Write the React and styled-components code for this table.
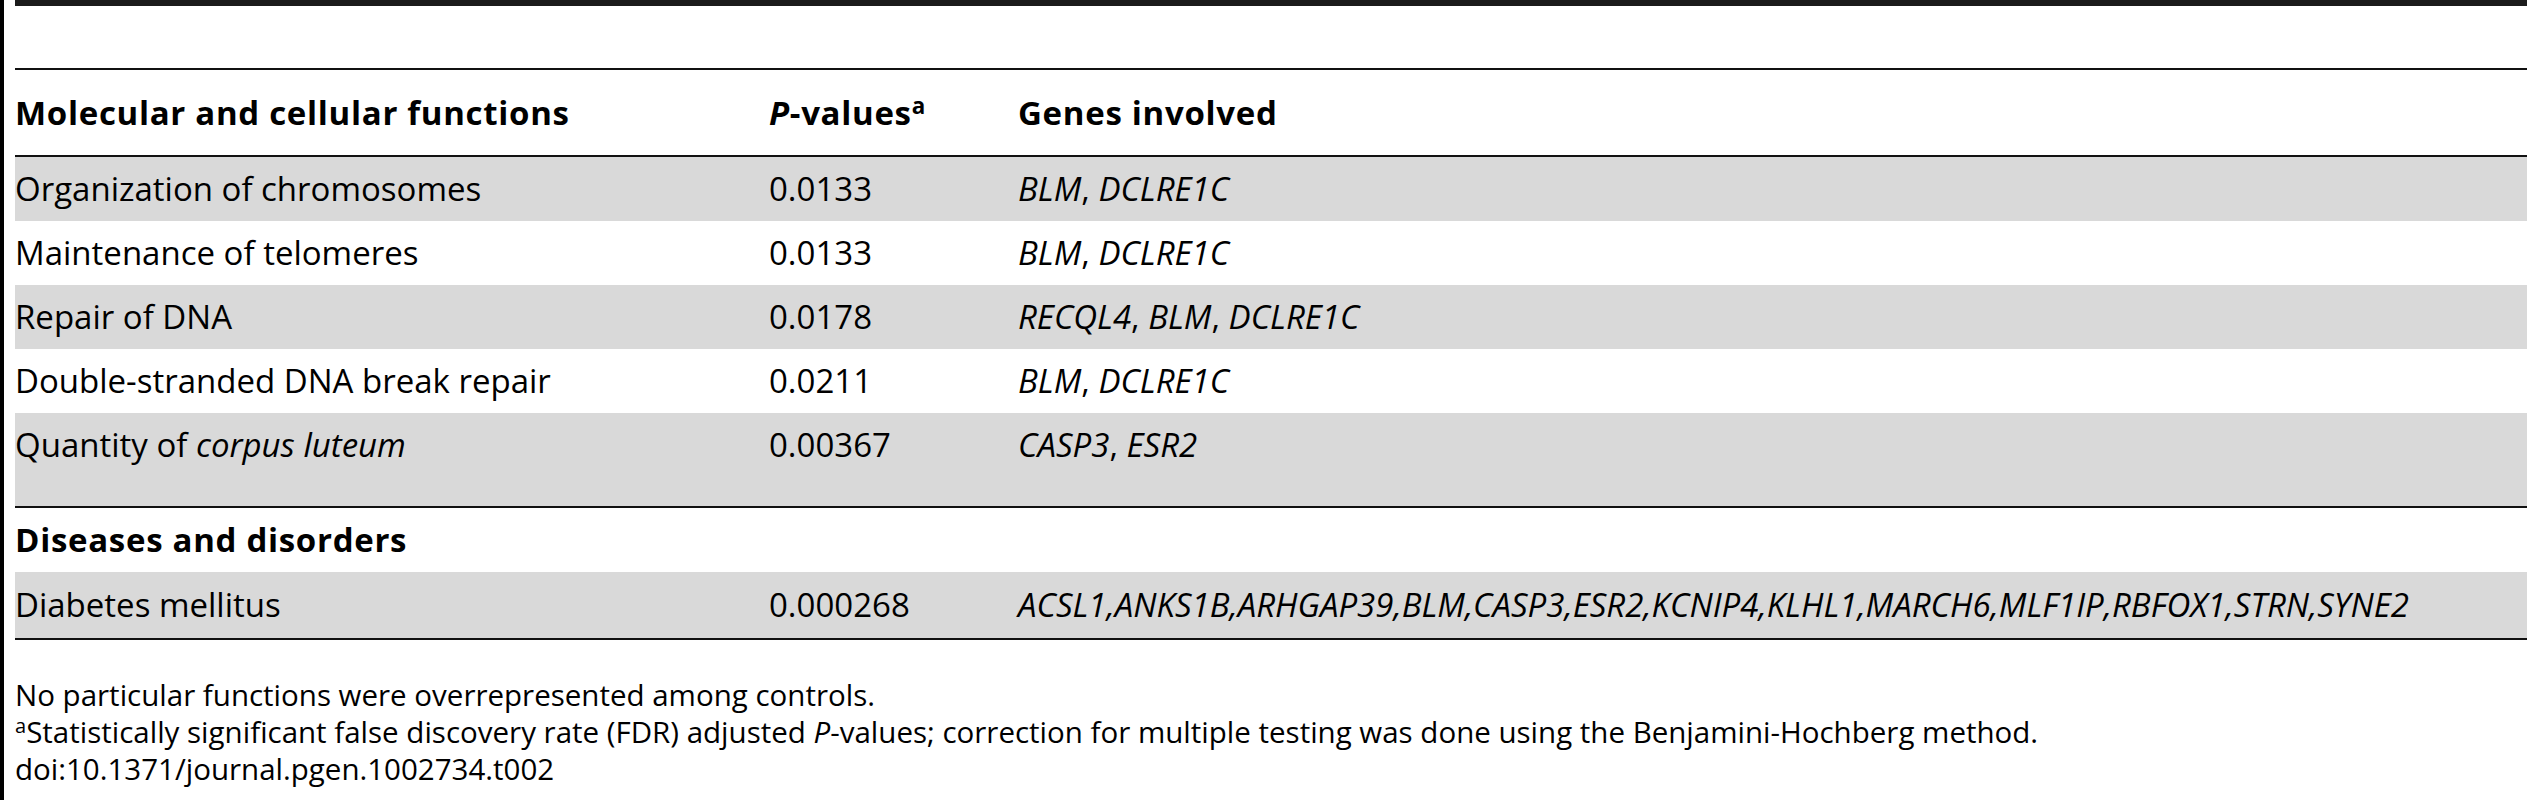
import React from "react";
import styled, { createGlobalStyle } from "styled-components";

const GlobalStyle = createGlobalStyle`
  html, body {
    margin: 0;
    padding: 0;
    background: #fff;
  }
  body {
    font-family: "Open Sans", "Noto Sans", "DejaVu Sans", sans-serif;
    color: #000;
  }
`;

const Page = styled.div`
  min-height: 800px;
  box-sizing: border-box;
  border-left: 4px solid #000;
  padding-left: 11px;
  font-size: 33px;
  line-height: 1.2;
`;

const TopRule = styled.div`
  height: 6px;
  background: #1b1b1b;
  margin-bottom: 62px;
`;

const Rule = styled.div`
  height: 2px;
  background: #111;
`;

const Row = styled.div`
  display: grid;
  grid-template-columns: 754px 249px 1fr;
  align-items: center;
  box-sizing: border-box;
  min-height: ${(p) => p.$height || 64}px;
  padding-bottom: ${(p) => p.$extra || 0}px;
  background: ${(p) => (p.$shaded ? "#d9d9d9" : "#fff")};
  font-weight: ${(p) => (p.$bold ? 700 : 400)};
  letter-spacing: ${(p) => (p.$bold ? "0.7px" : "0")};
`;

const Cell = styled.div`
  white-space: nowrap;
`;

const Gene = styled.i`
  font-style: italic;
`;

const Sup = styled.sup`
  font-size: 0.68em;
  line-height: 0;
  vertical-align: 0.5em;
`;

const Notes = styled.div`
  padding-top: 36px;
  font-size: 29.5px;
  line-height: 37px;
`;

const Note = styled.div`
  white-space: nowrap;
`;

const genes = (list) =>
  list.map((g, i) => (
    <React.Fragment key={g}>
      {i > 0 && ", "}
      <Gene>{g}</Gene>
    </React.Fragment>
  ));

const functionRows = [
  { name: "Organization of chromosomes", p: "0.0133", genes: ["BLM", "DCLRE1C"] },
  { name: "Maintenance of telomeres", p: "0.0133", genes: ["BLM", "DCLRE1C"] },
  { name: "Repair of DNA", p: "0.0178", genes: ["RECQL4", "BLM", "DCLRE1C"] },
  { name: "Double-stranded DNA break repair", p: "0.0211", genes: ["BLM", "DCLRE1C"] },
  {
    name: (
      <>
        Quantity of <Gene>corpus luteum</Gene>
      </>
    ),
    p: "0.00367",
    genes: ["CASP3", "ESR2"],
    extra: 29,
  },
];

const diabetesGenes =
  "ACSL1,ANKS1B,ARHGAP39,BLM,CASP3,ESR2,KCNIP4,KLHL1,MARCH6,MLF1IP,RBFOX1,STRN,SYNE2";

export default function App() {
  return (
    <>
      <GlobalStyle />
      <Page>
        <TopRule />
        <Rule />
        <Row $height={85} $bold>
          <Cell>Molecular and cellular functions</Cell>
          <Cell>
            <Gene>P</Gene>-values<Sup>a</Sup>
          </Cell>
          <Cell>Genes involved</Cell>
        </Row>
        <Rule />
        {functionRows.map((row, i) => (
          <Row key={i} $shaded={i % 2 === 0} $extra={row.extra} $height={64 + (row.extra || 0)}>
            <Cell>{row.name}</Cell>
            <Cell>{row.p}</Cell>
            <Cell>{genes(row.genes)}</Cell>
          </Row>
        ))}
        <Rule />
        <Row $bold>
          <Cell>Diseases and disorders</Cell>
        </Row>
        <Row $shaded $height={66}>
          <Cell>Diabetes mellitus</Cell>
          <Cell>0.000268</Cell>
          <Cell>
            <Gene>{diabetesGenes}</Gene>
          </Cell>
        </Row>
        <Rule />
        <Notes>
          <Note>No particular functions were overrepresented among controls.</Note>
          <Note>
            <Sup>a</Sup>Statistically significant false discovery rate (FDR) adjusted{" "}
            <Gene>P</Gene>-values; correction for multiple testing was done using the
            Benjamini-Hochberg method.
          </Note>
          <Note>doi:10.1371/journal.pgen.1002734.t002</Note>
        </Notes>
      </Page>
    </>
  );
}
